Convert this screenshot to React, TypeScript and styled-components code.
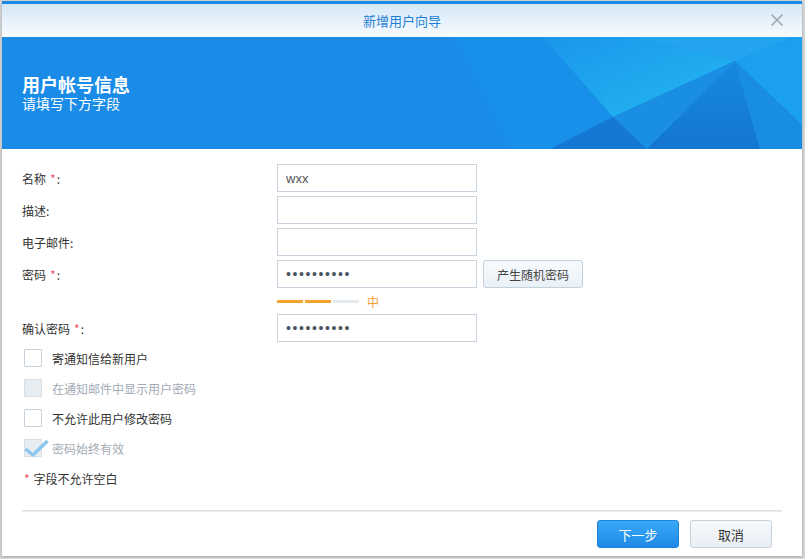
import React from "react";
import styled, { createGlobalStyle } from "styled-components";

const GlobalStyle = createGlobalStyle`
  html, body {
    margin: 0;
    padding: 0;
    background: #d6d8da;
    font-family: "Noto Sans CJK SC", "Liberation Sans", sans-serif;
  }
`;

const Page = styled.div`
  padding: 1px 0 0 2px;
  height: 558px;
  box-sizing: border-box;
`;

const Dialog = styled.div`
  width: 800px;
  height: 555px;
  background: #fff;
  border-top: 3px solid #1a8ae6;
  box-sizing: border-box;
  display: flex;
  flex-direction: column;
  box-shadow: 0 1px 3px rgba(0, 0, 0, 0.25);
`;

const TitleBar = styled.div`
  height: 33px;
  flex: none;
  display: flex;
  align-items: center;
  justify-content: center;
  position: relative;
  background: linear-gradient(#d4e7f8, #f8fbff);
  color: #1e7fd6;
  font-size: 13px;
`;

const CloseButton = styled.div`
  position: absolute;
  right: 18px;
  top: 9px;
  width: 14px;
  height: 14px;
  display: flex;
`;

const Banner = styled.div`
  height: 112px;
  flex: none;
  background: #1a8ce8;
  position: relative;
  overflow: hidden;
  display: flex;
  flex-direction: column;
  justify-content: center;
  gap: 1px;
  padding-left: 20px;
  color: #fff;
`;

const BannerArt = styled.svg`
  position: absolute;
  left: 0;
  top: 0;
`;

const BannerTitle = styled.div`
  position: relative;
  font-size: 18px;
  font-weight: bold;
  line-height: 20px;
`;

const BannerSub = styled.div`
  position: relative;
  font-size: 14px;
  line-height: 17px;
`;

const Body = styled.div`
  flex: 1;
  display: flex;
  flex-direction: column;
  padding: 15px 20px 0 20px;
`;

const Form = styled.div`
  display: grid;
  grid-template-columns: 255px auto;
  row-gap: 4px;
  align-items: center;
`;

const Label = styled.div`
  font-size: 12px;
  color: #333;
`;

const Star = styled.span`
  color: #e8546b;
  margin: 0 1px 0 4px;
`;

const FieldRow = styled.div`
  display: flex;
  align-items: center;
  gap: 6px;
`;

const TextInput = styled.input`
  width: 200px;
  height: 28px;
  box-sizing: border-box;
  border: 1px solid #c9d3dd;
  border-radius: 0;
  padding: 0 8px;
  font-family: "Liberation Sans", sans-serif;
  font-size: 13px;
  color: #555;
  outline: none;
  &[type="password"] {
    font-size: 14px;
    letter-spacing: 1.6px;
    color: #4a5560;
  }
`;

const GhostButton = styled.button`
  height: 28px;
  padding: 0 13px;
  border: 1px solid #c3d1de;
  border-radius: 3px;
  background: linear-gradient(#f8fbfd, #e9f0f6);
  color: #444;
  font-family: "Noto Sans CJK SC", sans-serif;
  font-size: 12px;
`;

const Strength = styled.div`
  height: 18px;
  display: flex;
  align-items: center;
  gap: 2px;
`;

const Segment = styled.div<{ $on?: boolean }>`
  width: 26px;
  height: 3px;
  background: ${(p) => (p.$on ? "#f2a330" : "#e5eaef")};
`;

const StrengthText = styled.span`
  margin-left: 6px;
  font-size: 12px;
  color: #f0a02c;
`;

const Checks = styled.div`
  display: flex;
  flex-direction: column;
  gap: 12px;
  margin-top: 7px;
  padding-left: 2px;
`;

const CheckRow = styled.div<{ $disabled?: boolean }>`
  display: flex;
  align-items: center;
  gap: 10px;
  height: 18px;
  font-size: 12px;
  color: ${(p) => (p.$disabled ? "#a3abb5" : "#333")};
`;

const Box = styled.div<{ $disabled?: boolean }>`
  width: 18px;
  height: 18px;
  box-sizing: border-box;
  border: 1px solid ${(p) => (p.$disabled ? "#d6dee6" : "#c7d1db")};
  background: ${(p) => (p.$disabled ? "#e8edf2" : "#fff")};
  border-radius: 1px;
  position: relative;
`;

const Tick = styled.svg`
  position: absolute;
  left: -1px;
  top: -1px;
  overflow: visible;
`;

const Note = styled.div`
  margin-top: 14px;
  padding-left: 2px;
  font-size: 12px;
  line-height: 16px;
  color: #333;
  display: flex;
  gap: 4px;
`;

const NoteStar = styled.span`
  color: #e8546b;
`;

const Divider = styled.div`
  margin-top: auto;
  height: 2px;
  background: linear-gradient(#dcdcdc, #f1f1f1);
`;

const Footer = styled.div`
  display: flex;
  justify-content: flex-end;
  gap: 11px;
  padding: 8px 10px 8px 0;
`;

const Button = styled.button<{ $primary?: boolean }>`
  width: 82px;
  height: 28px;
  border-radius: 3px;
  font-family: "Noto Sans CJK SC", sans-serif;
  font-size: 13px;
  border: 1px solid ${(p) => (p.$primary ? "#1f84d8" : "#c5d2de")};
  background: ${(p) =>
    p.$primary
      ? "linear-gradient(#3aa8f7, #1d8be6)"
      : "linear-gradient(#f7fafc, #e8eef4)"};
  color: ${(p) => (p.$primary ? "#fff" : "#333")};
`;

const checks = [
  { text: "寄通知信给新用户" },
  { text: "在通知邮件中显示用户密码", disabled: true },
  { text: "不允许此用户修改密码" },
  { text: "密码始终有效", disabled: true, checked: true },
];

export default function App() {
  return (
    <>
      <GlobalStyle />
      <Page>
        <Dialog>
          <TitleBar>
            新增用户向导
            <CloseButton>
              <svg width="14" height="14" viewBox="0 0 14 14">
                <path d="M1.5 1.5 L12.5 12.5 M12.5 1.5 L1.5 12.5" stroke="#9ea8b1" strokeWidth="1.6" fill="none" />
              </svg>
            </CloseButton>
          </TitleBar>
          <Banner>
            <BannerArt width="800" height="112" viewBox="0 0 800 112">
              <defs>
                <linearGradient id="glow" x1="0" y1="0" x2="1" y2="1">
                  <stop offset="0" stopColor="#1a96eb" />
                  <stop offset="0.75" stopColor="#21b0ef" />
                  <stop offset="1" stopColor="#1c9dea" />
                </linearGradient>
                <linearGradient id="dark" x1="0" y1="0" x2="0" y2="1">
                  <stop offset="0" stopColor="#1789df" />
                  <stop offset="1" stopColor="#1476d0" />
                </linearGradient>
              </defs>
              <polygon points="453,0 541,0 611,80 548,112 508,112" fill="#1890ea" />
              <polygon points="541,0 631,0 733,24 611,80" fill="url(#glow)" />
              <polygon points="631,0 791,0 733,24" fill="#22a4ee" />
              <polygon points="791,0 800,0 800,88 733,24" fill="#1ba0ee" />
              <polygon points="611,80 733,24 645,112" fill="#1a8ee3" />
              <polygon points="548,112 611,80 645,112" fill="#1578d2" />
              <polygon points="733,24 645,112 758,112" fill="url(#dark)" />
              <polygon points="733,24 758,112 800,112 800,88" fill="#198de2" />
            </BannerArt>
            <BannerTitle>用户帐号信息</BannerTitle>
            <BannerSub>请填写下方字段</BannerSub>
          </Banner>
          <Body>
            <Form>
              <Label>
                名称<Star>*</Star>:
              </Label>
              <TextInput defaultValue="wxx" />
              <Label>描述:</Label>
              <TextInput />
              <Label>电子邮件:</Label>
              <TextInput />
              <Label>
                密码<Star>*</Star>:
              </Label>
              <FieldRow>
                <TextInput type="password" defaultValue="abcdefghij" />
                <GhostButton>产生随机密码</GhostButton>
              </FieldRow>
              <div />
              <Strength>
                <Segment $on />
                <Segment $on />
                <Segment />
                <StrengthText>中</StrengthText>
              </Strength>
              <Label>
                确认密码<Star>*</Star>:
              </Label>
              <TextInput type="password" defaultValue="abcdefghij" />
            </Form>
            <Checks>
              {checks.map((c) => (
                <CheckRow key={c.text} $disabled={c.disabled}>
                  <Box $disabled={c.disabled}>
                    {c.checked && (
                      <Tick width="18" height="18" viewBox="0 0 18 18">
                        <path d="M1.5 10 L9 16 L23.5 2" stroke="#8cc6ef" strokeWidth="3.4" fill="none" strokeLinejoin="round" />
                      </Tick>
                    )}
                  </Box>
                  {c.text}
                </CheckRow>
              ))}
            </Checks>
            <Note>
              <NoteStar>*</NoteStar>
              字段不允许空白
            </Note>
            <Divider />
            <Footer>
              <Button $primary>下一步</Button>
              <Button>取消</Button>
            </Footer>
          </Body>
        </Dialog>
      </Page>
    </>
  );
}
